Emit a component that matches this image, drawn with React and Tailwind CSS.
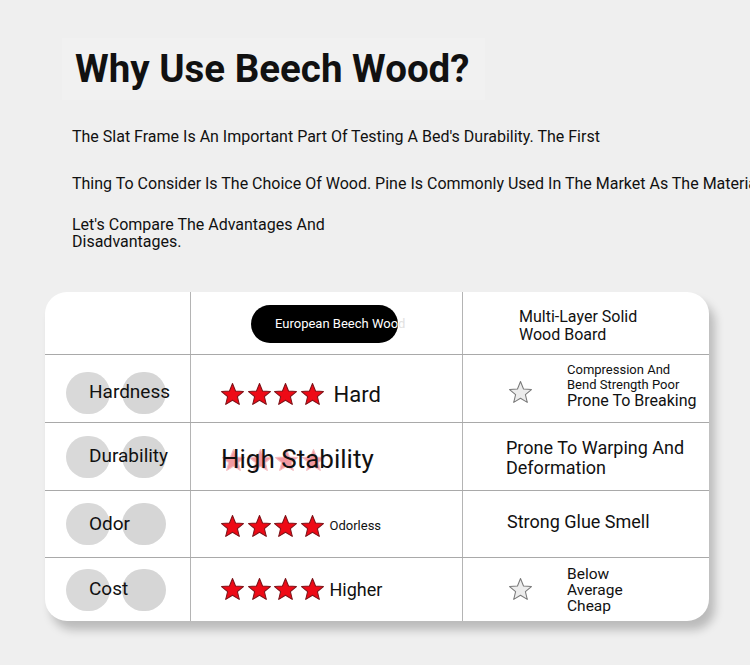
import React from "react";

function Star({ hollow = false, faint = false }) {
  const fill = hollow ? "#ececec" : faint ? "#ec6f79" : "#ee0a16";
  const stroke = hollow ? "#7a7a7a" : faint ? "#f0a0a6" : "#7d1218";
  return (
    <svg width="25" height="25" viewBox="0 0 24 24" className="shrink-0">
      <polygon
        points="12,1.5 14.9,8.6 22.5,9.2 16.7,14.1 18.5,21.5 12,17.5 5.5,21.5 7.3,14.1 1.5,9.2 9.1,8.6"
        fill={fill}
        stroke={stroke}
        strokeWidth="1"
        strokeLinejoin="round"
      />
    </svg>
  );
}

function Stars({ faint }) {
  return (
    <div className="flex gap-[1.5px]">
      <Star faint={faint} />
      <Star faint={faint} />
      <Star faint={faint} />
      <Star faint={faint} />
    </div>
  );
}

function Label({ text, pt = "" }) {
  return (
    <div className={"relative h-full flex items-center " + pt}>
      <div className="relative w-full h-[42px] flex items-center">
        <div className="absolute left-[21px] top-0 w-[44px] h-[42px] rounded-full bg-[#d9d9d9]" />
        <div className="absolute left-[77px] top-0 w-[44px] h-[42px] rounded-full bg-[#d6d6d6]" />
        <span className="relative pl-[44px] text-[19px] text-[#111]">{text}</span>
      </div>
    </div>
  );
}

const rows = [
  {
    label: "Hardness",
    labelPt: "pt-[8px]",
    h: "h-[68px]",
    mid: (
      <div className="flex items-center pl-[29px] pt-[12px] h-full gap-[9px]">
        <Stars />
        <span className="text-[22px] text-[#111]">Hard</span>
      </div>
    ),
    right: (
      <div className="flex items-center h-full pl-[45px]">
        <div className="mt-[8px]">
          <Star hollow />
        </div>
        <div className="pl-[34px] leading-[15px] text-[#111] -mt-[7px]">
          <div className="text-[13px]">Compression And</div>
          <div className="text-[13px]">Bend Strength Poor</div>
          <div className="text-[16px] leading-[17px]">Prone To Breaking</div>
        </div>
      </div>
    ),
  },
  {
    label: "Durability",
    labelPt: "",
    h: "h-[68px]",
    mid: (
      <div className="relative flex items-center pl-[30px] h-full">
        <div className="opacity-70 mt-[8px]">
          <Stars faint />
        </div>
        <span className="absolute left-[30px] top-1/2 -translate-y-1/2 mt-[2px] text-[26px] text-[#111]">
          High Stability
        </span>
      </div>
    ),
    right: (
      <div className="flex items-center h-full pl-[43px]">
        <div className="text-[18px] leading-[20px] text-[#111] mt-[2px]">
          <div>Prone To Warping And</div>
          <div>Deformation</div>
        </div>
      </div>
    ),
  },
  {
    label: "Odor",
    labelPt: "",
    h: "h-[67px]",
    mid: (
      <div className="flex items-center pl-[29px] h-full gap-[5px] mt-[2px]">
        <Stars />
        <span className="text-[13px] text-[#111]">Odorless</span>
      </div>
    ),
    right: (
      <div className="flex items-center h-full pl-[44px]">
        <span className="text-[18px] text-[#111] -mt-[5px]">Strong Glue Smell</span>
      </div>
    ),
  },
  {
    label: "Cost",
    labelPt: "",
    h: "h-[63px]",
    mid: (
      <div className="flex items-center pl-[29px] h-full gap-[5px]">
        <Stars />
        <span className="text-[18px] text-[#111]">Higher</span>
      </div>
    ),
    right: (
      <div className="flex items-center h-full pl-[45px]">
        <Star hollow />
        <div className="pl-[34px] text-[15.5px] leading-[16px] text-[#111]">
          <div>Below</div>
          <div>Average</div>
          <div>Cheap</div>
        </div>
      </div>
    ),
  },
];

export default function App() {
  return (
    <div
      className="w-[750px] h-[665px] overflow-hidden bg-[#efefef]"
      style={{ fontFamily: "Roboto, 'Liberation Sans', sans-serif" }}
    >
      <div className="pt-[38px] pl-[62px]">
        <div className="w-[423px] h-[62px] flex items-center pl-[13px] bg-[#f1f1f1]">
          <h1 className="text-[38.5px] font-bold text-[#111]">Why Use Beech Wood?</h1>
        </div>
      </div>

      <div className="pl-[72px] text-[16px] text-[#111]">
        <p className="mt-[27px] leading-[20px] whitespace-nowrap">
          The Slat Frame Is An Important Part Of Testing A Bed's Durability. The First
        </p>
        <p className="mt-[27px] leading-[20px] whitespace-nowrap">
          Thing To Consider Is The Choice Of Wood. Pine Is Commonly Used In The Market As The Material
        </p>
        <p className="mt-[22px] leading-[17px]">
          Let's Compare The Advantages And
          <br />
          Disadvantages.
        </p>
      </div>

      <div className="ml-[45px] mt-[42px] w-[664px] bg-white rounded-[22px] overflow-hidden shadow-[6px_9px_10px_rgba(0,0,0,0.22)]">
        <div className="grid grid-cols-[146px_272px_1fr] h-[63px] border-b border-[#a9a9a9]">
          <div className="border-r border-[#b4b4b4]" />
          <div className="border-r border-[#b4b4b4] flex items-center pl-[60px] pt-[1px]">
            <div className="relative w-[147px] h-[38px]">
              <span className="absolute left-[24px] top-1/2 -translate-y-1/2 whitespace-nowrap text-[13px] text-[#e2e2e2]">
                European Beech Wood
              </span>
              <div className="absolute inset-0 rounded-full bg-black overflow-hidden">
                <span className="absolute left-[24px] top-1/2 -translate-y-1/2 whitespace-nowrap text-[13px] text-white">
                  European Beech Wood
                </span>
              </div>
            </div>
          </div>
          <div className="flex items-center pl-[56px] pt-[6px]">
            <div className="text-[16px] leading-[18px] text-[#111]">
              <div>Multi-Layer Solid</div>
              <div>Wood Board</div>
            </div>
          </div>
        </div>
        {rows.map((r, i) => (
          <div
            key={r.label}
            className={
              "grid grid-cols-[146px_272px_1fr] " +
              r.h +
              (i < rows.length - 1 ? " border-b border-[#a9a9a9]" : "")
            }
          >
            <div className="border-r border-[#b4b4b4]">
              <Label text={r.label} pt={r.labelPt} />
            </div>
            <div className="border-r border-[#b4b4b4]">{r.mid}</div>
            <div>{r.right}</div>
          </div>
        ))}
      </div>
    </div>
  );
}
